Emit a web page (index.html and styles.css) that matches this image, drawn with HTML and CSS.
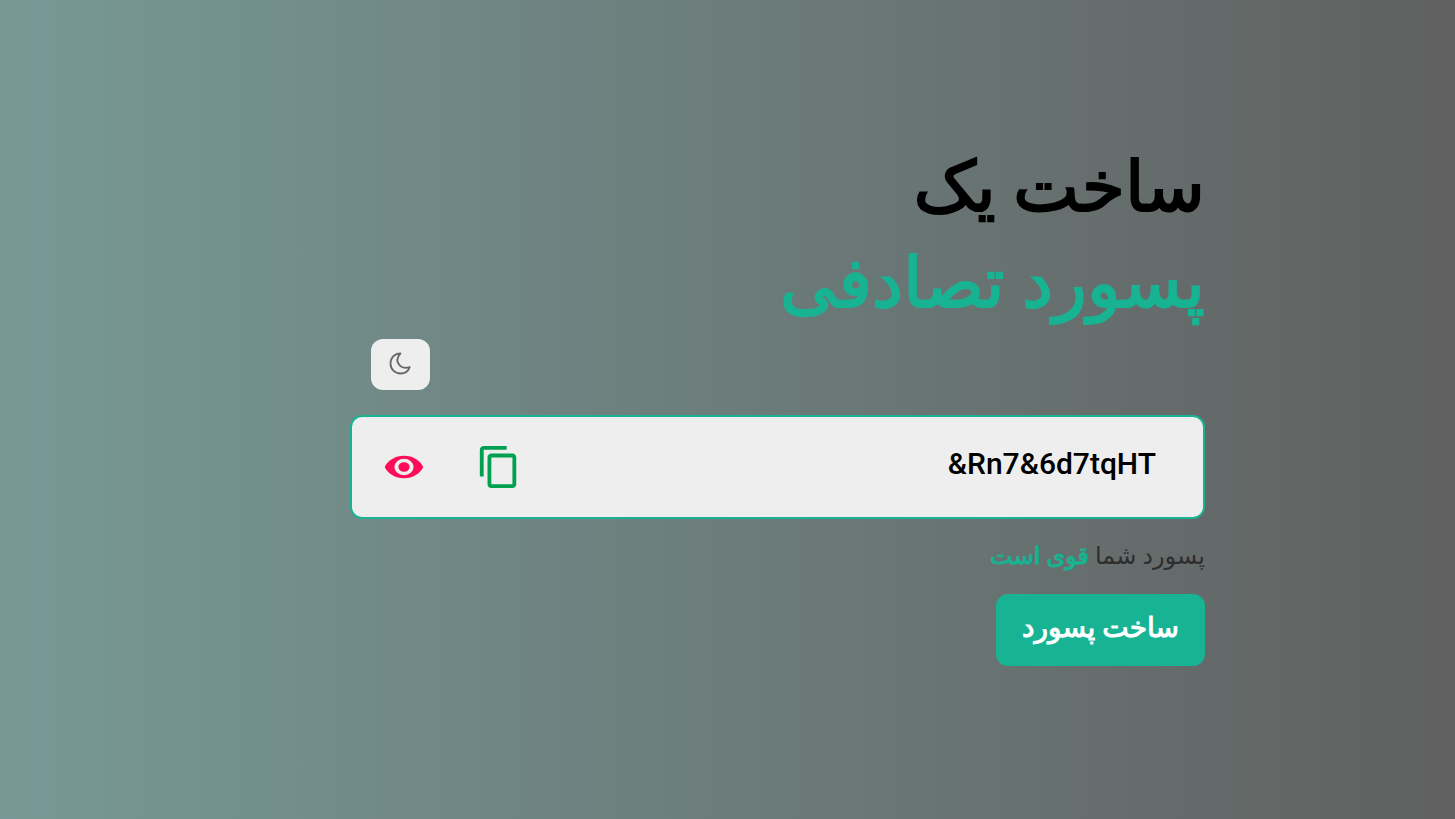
FILE: index.html
```html
<!DOCTYPE html>
<html lang="fa" dir="rtl">
<head>
<meta charset="utf-8">
<title>ساخت پسورد</title>
<link rel="stylesheet" href="styles.css">
</head>
<body>
<main class="container">
  <h1 class="title">ساخت یک<span class="accent title-line">پسورد تصادفی</span></h1>
  <button class="theme" type="button" aria-label="حالت شب">
    <svg width="23" height="24" viewBox="0 0 23 24"><path d="M11.500 1.300C6 1.300 1.500 5.700 1.500 11.500s4.400 10 10 10c4.400 0 7.800-2.400 9.200-6.300-4 1.300-7.600.7-10-1.800-3-3.200-3-7.800.8-12.100z" fill="none" stroke="#66666b" stroke-width="1.800" stroke-linejoin="round"/></svg>
  </button>
  <div class="display">
    <input class="password" type="text" aria-label="پسورد" value="&amp;Rn7&amp;6d7tqHT" readonly>
    <button class="icon" type="button" aria-label="کپی">
      <svg width="46" height="46" viewBox="0 0 24 24"><path fill="#00a050" d="M16 1H4c-1.100 0-2 .9-2 2v14h2V3h12V1zm3 4H8c-1.100 0-2 .9-2 2v14c0 1.100.9 2 2 2h11c1.100 0 2-.9 2-2V7c0-1.100-.9-2-2-2zm0 16H8V7h11v14z"/></svg>
    </button>
    <button class="icon" type="button" aria-label="نمایش">
      <svg width="42" height="36" viewBox="0 0 24 24" preserveAspectRatio="none"><path fill="#ff0d5b" d="M12 4.500C7 4.500 2.700 7.600 1 12c1.700 4.400 6 7.500 11 7.500s9.300-3.100 11-7.500c-1.700-4.400-6-7.500-11-7.500zM12 17.500a5.500 5.500 0 1 1 0-11 5.500 5.500 0 0 1 0 11zm0-8.700a3.200 3.200 0 1 0 0 6.400 3.200 3.200 0 0 0 0-6.400z"/></svg>
    </button>
  </div>
  <p class="status">پسورد شما <span class="accent strong">قوی است</span></p>
  <button class="generate" type="button">ساخت پسورد</button>
</main>
</body>
</html>
```
FILE: styles.css
```css
* { box-sizing: border-box; }
body {
  margin: 0;
  min-height: 100vh;
  padding: 0 0 15px 100px;
  display: flex;
  align-items: center;
  justify-content: center;
  background: linear-gradient(to right, #779996, #606060);
  font-family: Roboto, "DejaVu Sans", sans-serif;
}
button { font: inherit; border: 0; cursor: pointer; }
svg { display: block; }
.container {
  width: 63.1%;
  display: flex;
  flex-direction: column;
  align-items: flex-start;
}
.title {
  margin: 0 0 8px;
  font-size: 70px;
  line-height: 96px;
  font-weight: 400;
  -webkit-text-stroke: 2px currentColor;
}
.title-line { display: block; }
.accent { color: #17b393; }
.theme {
  align-self: flex-end;
  margin: 0 0 25px 21px;
  padding: 13px 18px 14px;
  border-radius: 12px;
  background: #eee;
}
.display {
  width: 100%;
  display: flex;
  align-items: center;
  padding: 27px 31px;
  border: 2px solid #17b393;
  border-radius: 12px;
  background: #eee;
}
.password {
  flex: 1;
  min-width: 0;
  padding: 0 16px 6px;
  border: 0;
  background: none;
  color: #000;
  font: 500 30px/40px Roboto, sans-serif;
  direction: ltr;
  text-align: right;
}
.icon { padding: 0; background: none; }
.icon + .icon { margin-right: 51px; }
.status { margin: 19px 0 20px; font-size: 24px; line-height: 36px; color: #2e2e2e; }
.strong { -webkit-text-stroke: 1px currentColor; }
.generate {
  padding: 10px 26px 14px;
  border-radius: 12px;
  background: #17b393;
  color: #fff;
  font-size: 28px;
  line-height: 48px;
  -webkit-text-stroke: 1px currentColor;
}
```
